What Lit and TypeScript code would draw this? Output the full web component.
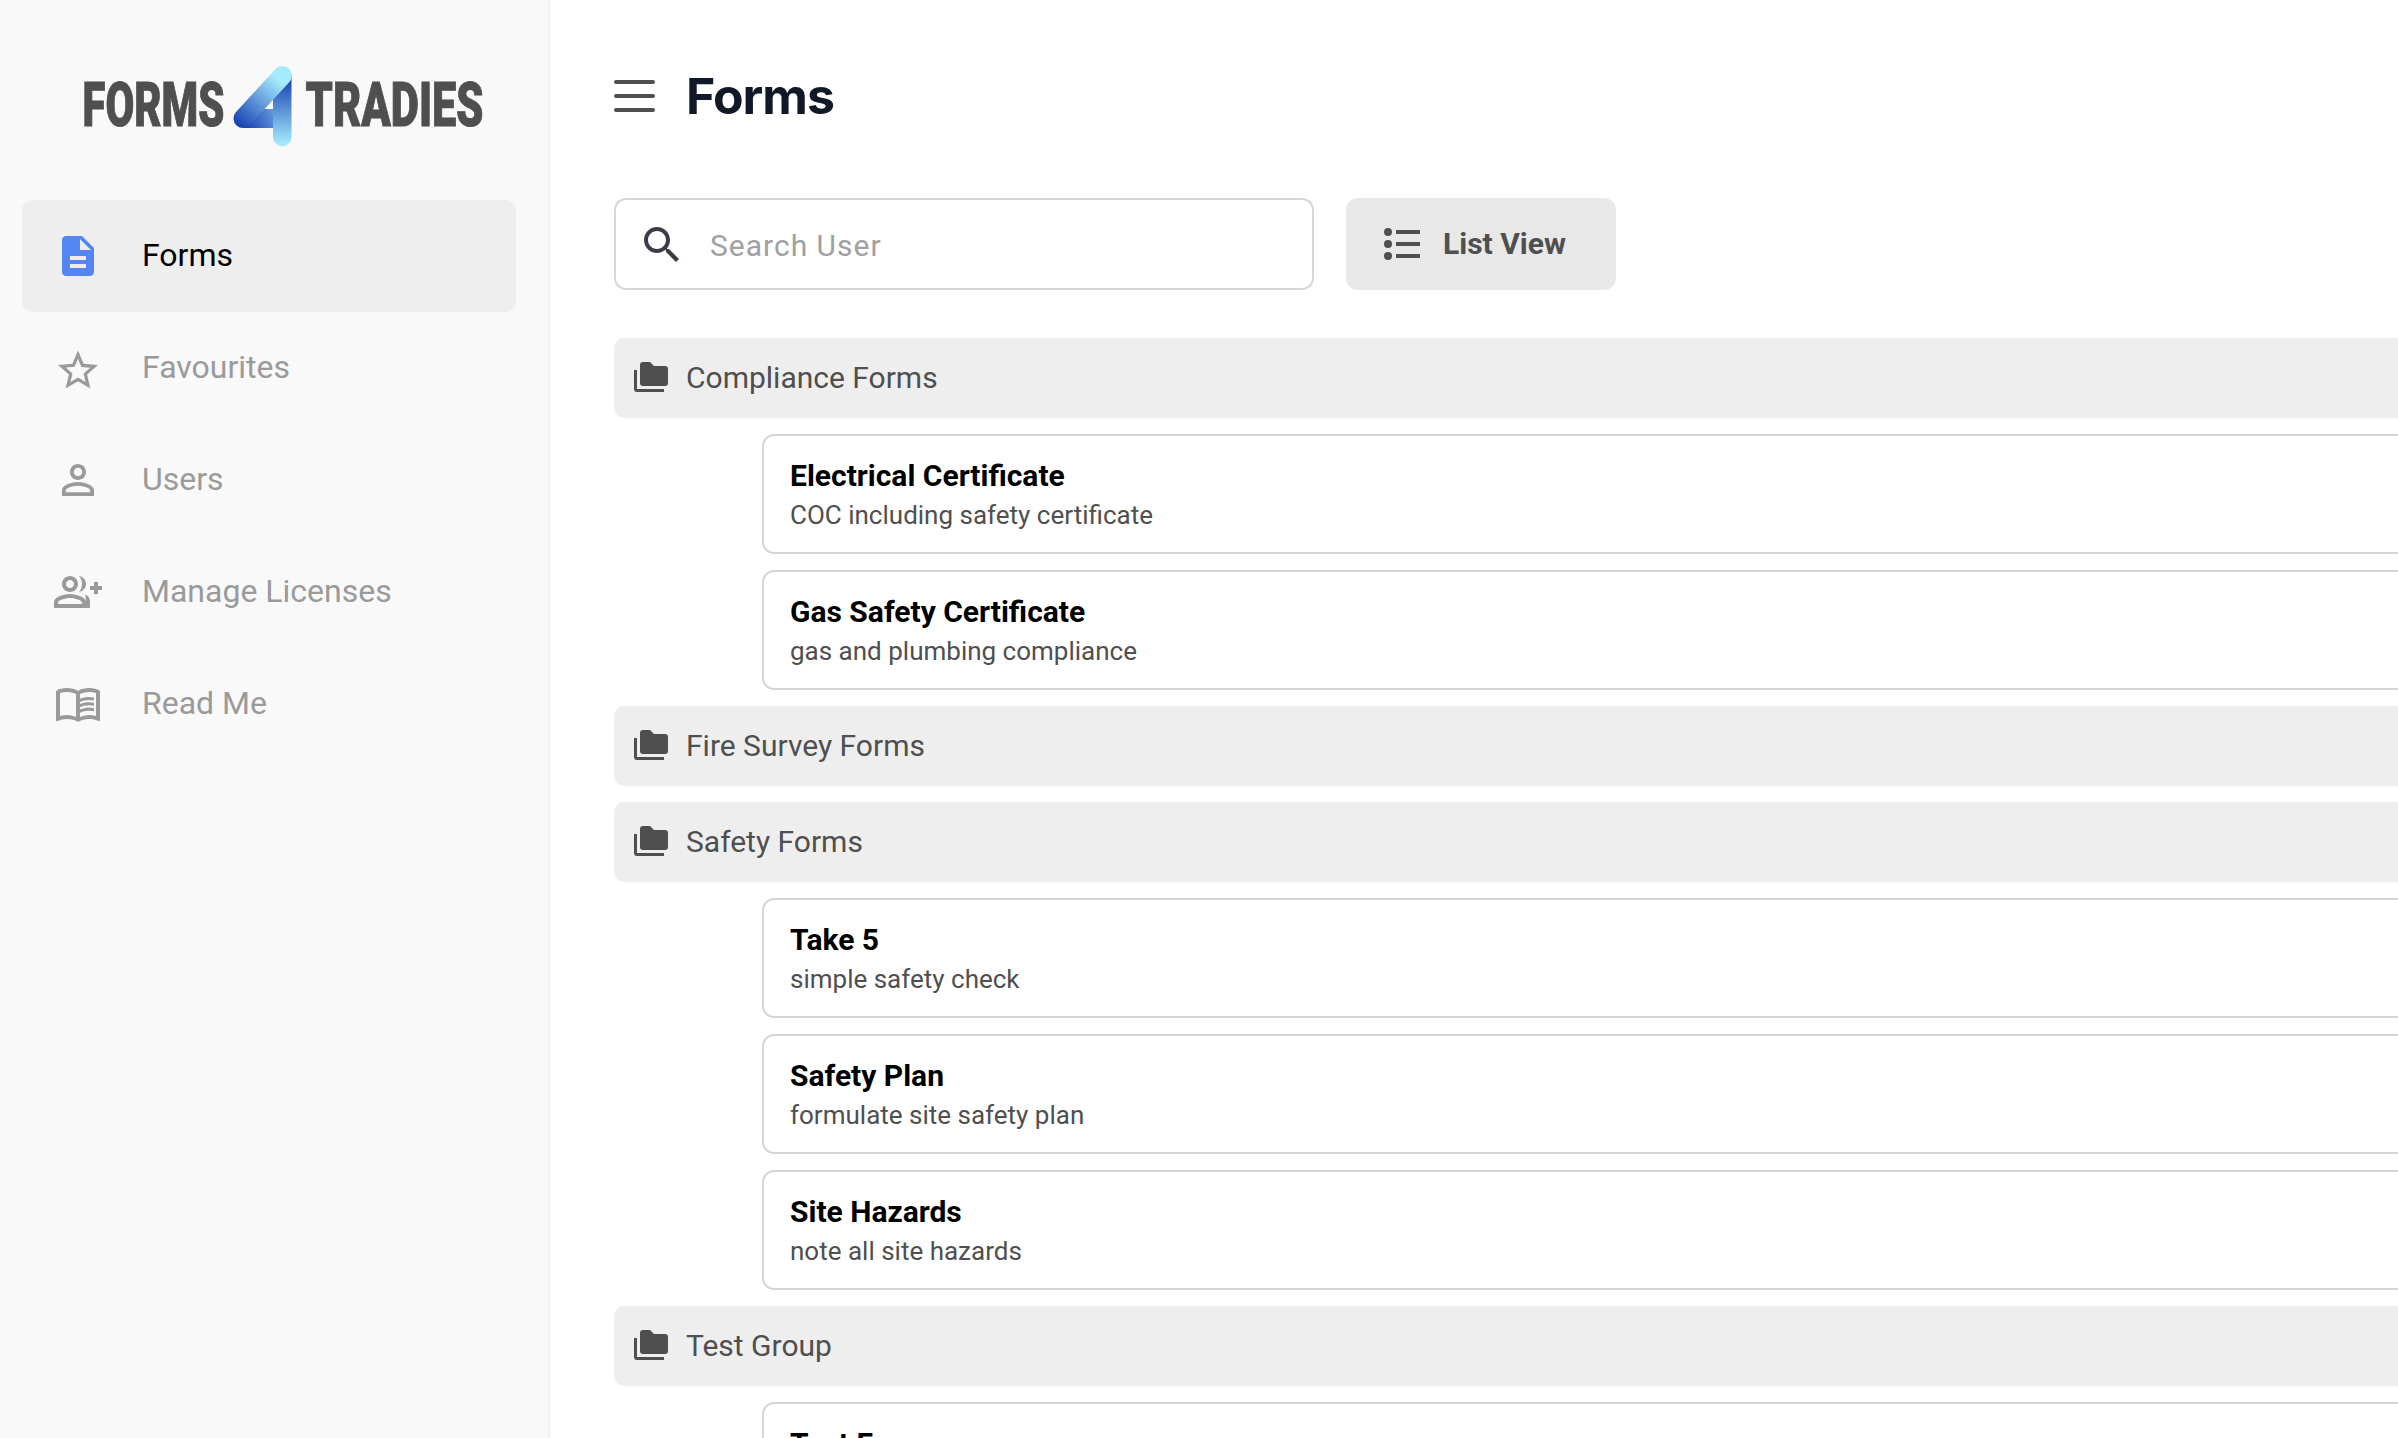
import { LitElement, html, css, svg } from 'lit'
import { customElement } from 'lit/decorators.js'

const navItems = [
  { label: 'Forms', icon: 'doc', active: true },
  { label: 'Favourites', icon: 'star' },
  { label: 'Users', icon: 'user' },
  { label: 'Manage Licenses', icon: 'group' },
  { label: 'Read Me', icon: 'book' }
]

const groups = [
  {
    name: 'Compliance Forms',
    forms: [
      { title: 'Electrical Certificate', sub: 'COC including safety certificate' },
      { title: 'Gas Safety Certificate', sub: 'gas and plumbing compliance' }
    ]
  },
  { name: 'Fire Survey Forms', forms: [] },
  {
    name: 'Safety Forms',
    forms: [
      { title: 'Take 5', sub: 'simple safety check' },
      { title: 'Safety Plan', sub: 'formulate site safety plan' },
      { title: 'Site Hazards', sub: 'note all site hazards' }
    ]
  },
  { name: 'Test Group', forms: [{ title: 'Test Form', sub: '' }] }
]

const navIcons: Record<string, ReturnType<typeof svg>> = {
  doc: svg`<path d="M14 2H6c-1.1 0-2 .9-2 2v16c0 1.1.9 2 2 2h12c1.1 0 2-.9 2-2V8l-6-6zm2 16H8v-2h8v2zm0-4H8v-2h8v2zm-3-5V3.5L18.5 9H13z"/>`,
  star: svg`<path transform="translate(0 1.3)" d="M22 9.24l-7.19-.62L12 2 9.19 8.63 2 9.24l5.46 4.73L5.82 21 12 17.27 18.18 21l-1.63-7.03L22 9.24zM12 15.4l-3.76 2.27 1-4.28-3.32-2.88 4.38-.38L12 6.1l1.71 4.04 4.38.38-3.32 2.88 1 4.28L12 15.4z"/>`,
  user: svg`<path d="M12 5.9c1.16 0 2.1.94 2.1 2.1s-.94 2.1-2.1 2.1S9.9 9.16 9.9 8s.94-2.1 2.1-2.1m0 9c2.97 0 6.1 1.46 6.1 2.1v1.1H5.9V17c0-.64 3.13-2.1 6.1-2.1M12 4C9.79 4 8 5.79 8 8s1.79 4 4 4 4-1.79 4-4-1.79-4-4-4zm0 9c-2.67 0-8 1.34-8 4v3h16v-3c0-2.66-5.33-4-8-4z"/>`,
  group: svg`<path d="M22 9V7h-2v2h-2v2h2v2h2v-2h2V9h-2zM8 12c2.21 0 4-1.79 4-4s-1.79-4-4-4-4 1.79-4 4 1.79 4 4 4zm0-6c1.1 0 2 .9 2 2s-.9 2-2 2-2-.9-2-2 .9-2 2-2zm0 7c-2.67 0-8 1.34-8 4v3h16v-3c0-2.66-5.33-4-8-4zm6 5H2v-.99C2.2 16.29 5.3 15 8 15s5.8 1.29 6 2v1zM12.5 4.05c2 .25 3.5 1.95 3.5 3.95s-1.5 3.7-3.5 3.95C13.5 10.8 14 9.4 14 8s-.5-2.8-1.5-3.95zM15.6 13.3c1.6.6 2.4 1.9 2.4 3.7v3h-2v-3c0-1.3-.2-2.5-.4-3.7z"/>`,
  book: svg`<g transform="translate(0 -.5)"><path d="M21 5c-1.11-.35-2.33-.5-3.5-.5-1.95 0-4.05.4-5.5 1.5-1.45-1.1-3.55-1.5-5.5-1.5S2.45 4.9 1 6v14.65c0 .25.25.5.5.5.1 0 .15-.05.25-.05C3.1 20.45 5.05 20 6.5 20c1.95 0 4.05.4 5.5 1.5 1.35-.85 3.8-1.5 5.5-1.5 1.65 0 3.35.3 4.75 1.05.1.05.15.05.25.05.25 0 .5-.25.5-.5V6c-.6-.45-1.25-.75-2-1zM3 18.5V7c1.1-.35 2.3-.5 3.5-.5 1.34 0 3.13.41 4.5.99v11.5C9.63 18.41 7.84 18 6.5 18c-1.2 0-2.4.15-3.5.5zm18 0c-1.1-.35-2.3-.5-3.5-.5-1.34 0-3.13.41-4.5.99V7.49c1.37-.59 3.16-.99 4.5-.99 1.2 0 2.4.15 3.5.5v11.5z"/><path d="M17.5 10.5c.88 0 1.73.09 2.5.26V9.24c-.79-.15-1.64-.24-2.5-.24-1.7 0-3.24.29-4.5.83v1.66c1.13-.64 2.7-.99 4.5-.99zM13 12.49v1.66c1.13-.64 2.7-.99 4.5-.99.88 0 1.73.09 2.5.26V11.9c-.79-.15-1.64-.24-2.5-.24-1.7 0-3.24.3-4.5.83zM17.5 14.33c-1.7 0-3.24.29-4.5.83v1.66c1.13-.64 2.7-.99 4.5-.99.88 0 1.73.09 2.5.26v-1.52c-.79-.16-1.64-.24-2.5-.24z"/></g>`
}

@customElement('app-root')
export class AppRoot extends LitElement {
  static styles = css`
    :host {
      display: flex;
      height: 100vh;
      overflow: hidden;
      background: #fff;
      font-family: Roboto, sans-serif;
    }

    .sidebar {
      flex: none;
      box-sizing: content-box;
      width: 548px;
      background: #f9f9f9;
      border-right: 2px solid #f0f0f0;
    }
    .logo {
      display: block;
      width: 548px;
      height: 200px;
      overflow: visible;
    }
    .logo-text {
      font-family: Roboto, sans-serif;
      font-size: 62px;
      font-weight: 900;
      fill: #4f4f4f;
      stroke: #4f4f4f;
      stroke-width: 1;
    }
    .nav {
      display: flex;
      flex-direction: column;
      padding: 0 32px 0 22px;
    }
    .nav-item {
      display: flex;
      align-items: center;
      gap: 40px;
      height: 112px;
      padding-left: 32px;
      border-radius: 10px;
      color: #9a9a9a;
      font-size: 32px;
    }
    .nav-item span {
      margin-top: -2px;
    }
    .nav-item svg {
      flex: none;
      width: 48px;
      height: 48px;
      fill: #9a9a9a;
    }
    .nav-item.active {
      background: #eeeeee;
      color: #000;
    }
    .nav-item.active svg {
      fill: #5386f0;
    }

    .main {
      flex: 1;
      min-width: 0;
      padding-left: 64px;
    }
    .header {
      display: flex;
      align-items: center;
      gap: 31px;
      height: 192px;
      margin-bottom: 6px;
    }
    .menu {
      display: flex;
      flex-direction: column;
      gap: 10px;
      width: 41px;
    }
    .menu span {
      height: 4px;
      border-radius: 2px;
      background: #4f4f4f;
    }
    h1 {
      margin: 0;
      color: #111827;
      font-family: Inter, sans-serif;
      font-size: 50px;
      font-weight: 700;
      letter-spacing: -1px;
    }

    .toolbar {
      display: flex;
      gap: 32px;
      height: 92px;
      margin-bottom: 48px;
    }
    .search {
      display: flex;
      align-items: center;
      gap: 24px;
      box-sizing: border-box;
      width: 700px;
      padding-left: 22px;
      border: 2px solid #d6d6d6;
      border-radius: 12px;
      background: #fff;
    }
    .search svg {
      flex: none;
      width: 48px;
      height: 48px;
      margin-top: 2px;
      fill: #3c3c46;
    }
    .search input {
      flex: 1;
      min-width: 0;
      margin-top: 3px;
      border: 0;
      outline: 0;
      padding: 0;
      background: none;
      font-family: Roboto, sans-serif;
      font-size: 30px;
      letter-spacing: 1px;
      color: #4f4f4f;
    }
    .search input::placeholder {
      color: #a0a0a0;
      opacity: 1;
    }
    .view-btn {
      display: flex;
      align-items: center;
      gap: 16px;
      box-sizing: border-box;
      width: 270px;
      padding: 0 0 0 33px;
      border: 0;
      border-radius: 12px;
      background: #e8e8e8;
      color: #4f4f4f;
      font-family: Roboto, sans-serif;
      font-size: 30px;
      font-weight: 700;
    }
    .view-btn span {
      margin-top: -2px;
    }
    .view-btn svg {
      flex: none;
      width: 48px;
      height: 48px;
      fill: #4f4f4f;
    }

    .list {
      display: flex;
      flex-direction: column;
      gap: 16px;
      margin-right: -24px;
    }
    .group {
      display: flex;
      align-items: center;
      gap: 18px;
      height: 80px;
      padding-left: 20px;
      border-radius: 10px;
      background: #eeeeee;
      color: #4f4f4f;
      font-size: 30px;
    }
    .group span {
      margin-top: -2px;
    }
    .group svg {
      flex: none;
      width: 34px;
      height: 30px;
      margin-top: -2px;
      fill: #4f4f4f;
    }
    .card {
      box-sizing: border-box;
      height: 120px;
      margin-left: 148px;
      padding: 21px 0 0 26px;
      border: 2px solid #d6d6d6;
      border-radius: 12px;
      background: #fff;
    }
    .card-title {
      color: #000;
      font-size: 30px;
      font-weight: 700;
      line-height: 38px;
    }
    .card-sub {
      margin-top: 1px;
      color: #4f4f4f;
      font-size: 26px;
      line-height: 38px;
    }
  `

  renderLogo () {
    return html`
      <svg class="logo" viewBox="0 0 548 200">
        <defs>
          <linearGradient id="band" gradientUnits="userSpaceOnUse" x1="283" y1="75" x2="238" y2="124">
            <stop offset="0.1" stop-color="#a6eafd"/>
            <stop offset="1" stop-color="#1a44b4"/>
          </linearGradient>
          <linearGradient id="stem" gradientUnits="userSpaceOnUse" x1="282" y1="80" x2="282" y2="144">
            <stop offset="0" stop-color="#1a44b4"/>
            <stop offset="1" stop-color="#a6eafd"/>
          </linearGradient>
          <linearGradient id="bar" gradientUnits="userSpaceOnUse" x1="245" y1="124" x2="276" y2="110">
            <stop offset="0" stop-color="#1a44b4"/>
            <stop offset="1" stop-color="#6a9fde"/>
          </linearGradient>
        </defs>
        <text class="logo-text" x="82.5" y="125.5" textLength="142" lengthAdjust="spacingAndGlyphs">FORMS</text>
        <path d="M273 94 L291.5 74 V137 a9.25 9.25 0 0 1 -18.5 0 z" fill="url(#stem)"/>
        <path d="M243 109 H273 V128 H243 z" fill="url(#bar)"/>
        <line x1="282.5" y1="75.5" x2="243" y2="118.5" stroke="url(#band)" stroke-width="19" stroke-linecap="round"/>
        <text class="logo-text" x="305.5" y="125.5" textLength="178" lengthAdjust="spacingAndGlyphs">TRADIES</text>
      </svg>
    `
  }

  render () {
    return html`
      <aside class="sidebar">
        ${this.renderLogo()}
        <nav class="nav">
          ${navItems.map(item => html`
            <div class="nav-item ${item.active ? 'active' : ''}">
              <svg viewBox="0 0 24 24">${navIcons[item.icon]}</svg>
              <span>${item.label}</span>
            </div>
          `)}
        </nav>
      </aside>
      <main class="main">
        <header class="header">
          <div class="menu"><span></span><span></span><span></span></div>
          <h1>Forms</h1>
        </header>
        <div class="toolbar">
          <label class="search">
            <svg viewBox="0 0 24 24"><path d="M15.5 14h-.79l-.28-.27C15.41 12.59 16 11.11 16 9.5 16 5.91 13.09 3 9.5 3S3 5.91 3 9.5 5.91 16 9.5 16c1.61 0 3.09-.59 4.23-1.57l.27.28v.79l5 4.99L20.49 19l-4.99-5zm-6 0C7.01 14 5 11.99 5 9.5S7.01 5 9.5 5 14 7.01 14 9.5 11.99 14 9.5 14z"/></svg>
            <input placeholder="Search User" />
          </label>
          <button class="view-btn">
            <svg viewBox="0 0 24 24">
              <circle cx="4.5" cy="6" r="2"/><circle cx="4.5" cy="12" r="2"/><circle cx="4.5" cy="18" r="2"/>
              <path d="M8.5 5h12v2h-12zM8.5 11h12v2h-12zM8.5 17h12v2h-12z"/>
            </svg>
            <span>List View</span>
          </button>
        </div>
        <div class="list">
          ${groups.map(group => html`
            <div class="group">
              <svg viewBox="0 0 34 30">
                <path d="M6 3a3 3 0 0 1 3-3h7l4 4h11a3 3 0 0 1 3 3v14a3 3 0 0 1-3 3H9a3 3 0 0 1-3-3z"/>
                <path d="M0 8h3v19h27v3H3a3 3 0 0 1-3-3z"/>
              </svg>
              <span>${group.name}</span>
            </div>
            ${group.forms.map(form => html`
              <div class="card">
                <div class="card-title">${form.title}</div>
                <div class="card-sub">${form.sub}</div>
              </div>
            `)}
          `)}
        </div>
      </main>
    `
  }
}
